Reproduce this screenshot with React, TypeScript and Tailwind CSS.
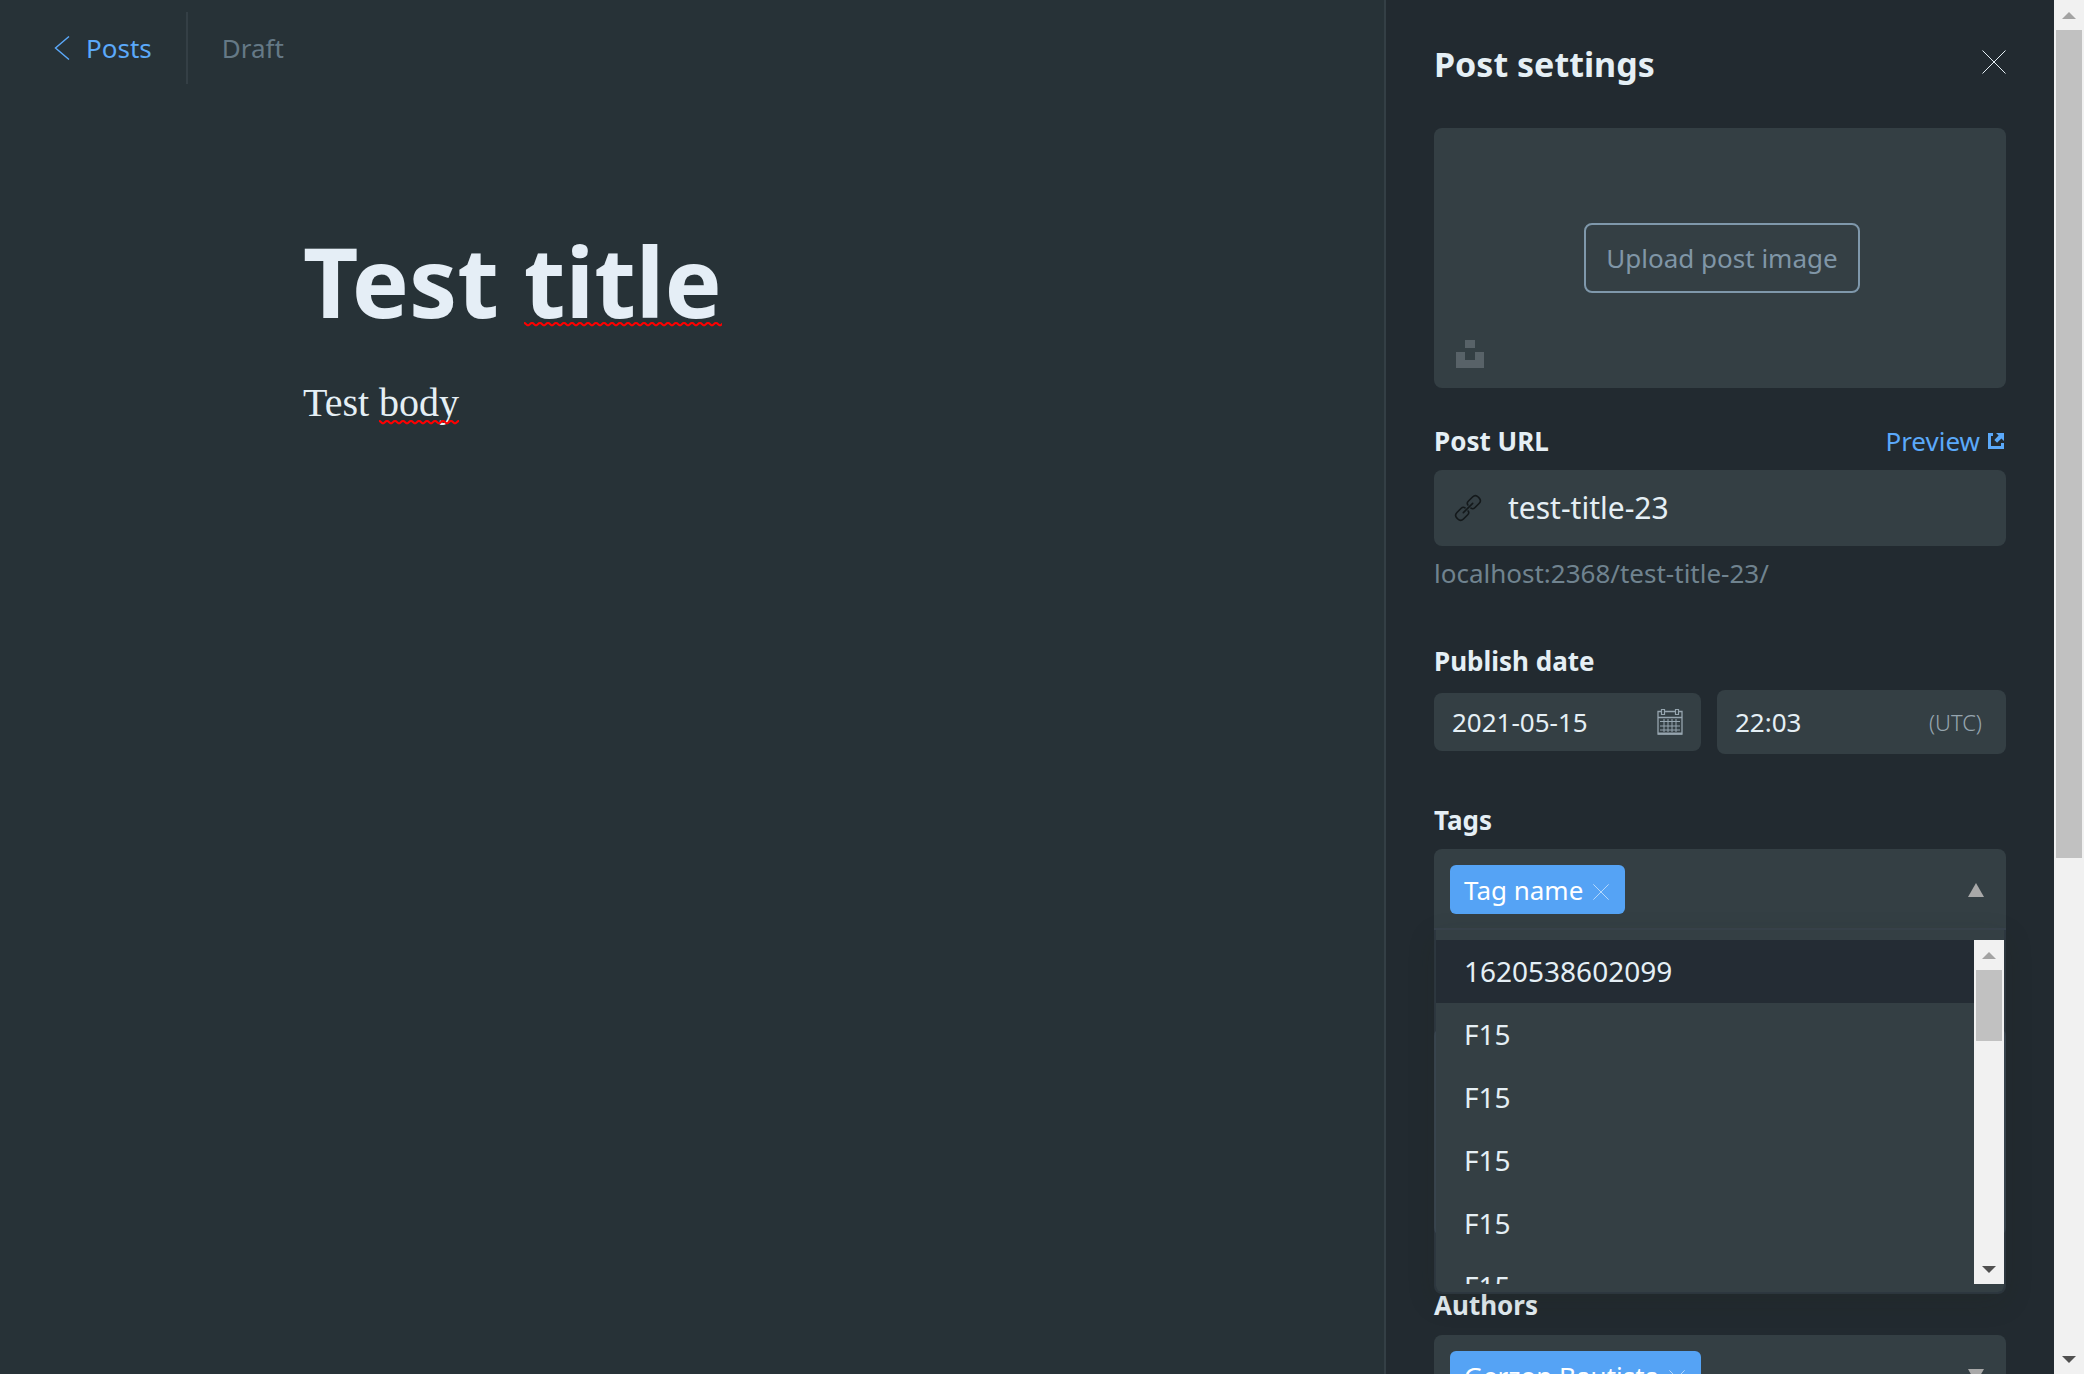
import type { ReactNode } from "react";

const tagOptions = ["1620538602099", "F15", "F15", "F15", "F15", "F15"];

function Cross({ className }: { className: string }) {
  return (
    <svg viewBox="0 0 24 24" fill="none" stroke="currentColor" className={className} aria-hidden="true">
      <path d="M0.5 0.5 23.5 23.5M23.5 0.5 0.5 23.5" vectorEffect="non-scaling-stroke" />
    </svg>
  );
}

function Triangle({ up = false, className }: { up?: boolean; className: string }) {
  return (
    <svg viewBox="0 0 16 14" preserveAspectRatio="none" fill="currentColor" className={className} aria-hidden="true">
      <path d={up ? "M8 0 16 14H0Z" : "M0 0H16L8 14Z"} />
    </svg>
  );
}

function Misspelled({ id, className, children }: { id: string; className: string; children: ReactNode }) {
  return (
    <span className="relative inline-block">
      {children}
      <svg className={"absolute left-0 h-[5px] w-full " + className} aria-hidden="true">
        <defs>
          <pattern id={id} width="8" height="5" patternUnits="userSpaceOnUse">
            <path d="M-1 1.200Q0 .8 1 1.200L3 3Q4 3.700 5 3L7 1.200Q8 .8 9 1.200" stroke="#ff0000" strokeWidth="2" fill="none" />
          </pattern>
        </defs>
        <rect width="100%" height="5" fill={`url(#${id})`} />
      </svg>
    </span>
  );
}

function Token({ children }: { children: string }) {
  return (
    <span className="flex h-[49px] items-center gap-2.5 rounded-md bg-[#55a3f5] pr-4 pl-3.5 text-white">
      {children}
      <button aria-label={"Remove " + children} className="mt-1 text-[#b5d8fb]">
        <Cross className="size-4" />
      </button>
    </span>
  );
}

function Scrollbar({ thumb }: { thumb: string }) {
  return (
    <div className="flex w-[30px] shrink-0 flex-col items-center bg-[#f1f1f1]" aria-hidden="true">
      <div className="flex h-[30px] shrink-0 items-center">
        <Triangle up className="h-[7px] w-3.5 text-[#a3a3a3]" />
      </div>
      <div className="min-h-0 w-full flex-1 px-0.5">
        <div className={"w-full bg-[#c1c1c1] " + thumb} />
      </div>
      <div className="flex h-[30px] shrink-0 items-center">
        <Triangle className="h-[7px] w-3.5 text-[#505050]" />
      </div>
    </div>
  );
}

const label = "block text-[26px] leading-9 font-bold text-[#e5eff5]";

export default function App() {
  return (
    <div className="flex h-screen overflow-hidden bg-[#273237] font-['Noto_Sans',sans-serif] text-[26px] leading-9 text-[#e5eff5]">
      <main className="min-w-0 flex-1">
        <header className="flex items-center py-3">
          <a href="#posts" className="flex h-[72px] items-center gap-4 border-r-2 border-[#343f45] pr-[34px] pl-[54px] text-[#5ba9fa]">
            <svg viewBox="0 0 16 24" fill="none" stroke="currentColor" className="h-6 w-4" aria-hidden="true">
              <path d="M15 0.5 1.5 12 15 23.5" strokeWidth="1.4" />
            </svg>
            Posts
          </a>
          <span className="pl-[34px] text-[#657986]">Draft</span>
        </header>
        <article className="mx-auto w-full max-w-[778px] pt-[135px]">
          <h1 className="text-[96px] leading-[100px] font-bold text-[#e5eef6]">
            Test <Misspelled id="wave-title" className="top-[91px]">title</Misspelled>
          </h1>
          <p className="mt-[42px] font-['Liberation_Serif',serif] text-[40px] leading-[60px]">
            Test <Misspelled id="wave-body" className="top-[47px]">body</Misspelled>
          </p>
        </article>
      </main>

      <aside className="w-[670px] shrink-0 border-l-2 border-[#343f45] bg-[#222a30] px-12 pt-10">
        <div className="flex items-start justify-between">
          <h2 className="text-[34px] leading-[48px] font-bold">Post settings</h2>
          <button aria-label="Close" className="flex h-11 items-center">
            <Cross className="size-6" />
          </button>
        </div>

        <div className="relative mt-10 flex h-[260px] items-center justify-center rounded-lg bg-[#343f44]">
          <button className="ml-1 h-[70px] rounded-lg border-2 border-[#7f98ab] px-5 text-[#8096a7]">Upload post image</button>
          <button aria-label="Choose from Unsplash" className="absolute bottom-5 left-[22px] text-[#586268]">
            <svg viewBox="0 0 28 28" fill="currentColor" className="size-7" aria-hidden="true">
              <path d="M9 0h10v8H9zM0 12h9v8h10v-8h9v16H0z" />
            </svg>
          </button>
        </div>

        <div className="mt-[35px] flex justify-between">
          <label htmlFor="url" className={label}>Post URL</label>
          <a href="#preview" className="mr-0.5 flex items-center gap-2 text-[#5ba9fa]">
            Preview
            <svg viewBox="0 0 16 16" fill="currentColor" className="size-4" aria-hidden="true">
              <path d="M0 0h5v3H3v10h10v-3h3v6H0zM8 0h8v8l-2.600-2.600-4.300 4.300-2.800-2.800L10.600 2.600z" />
            </svg>
          </a>
        </div>
        <div className="mt-[11px] flex h-[76px] items-center gap-[26px] rounded-lg bg-[#343f44] px-5">
          <svg viewBox="-14 -14 28 28" fill="none" stroke="#14191b" strokeWidth="1.6" strokeLinecap="round" className="size-7 shrink-0" aria-hidden="true">
            <g transform="rotate(-45)">
              <path d="M-6.600 0H6.600" />
              <path d="M2 2.200Q2.400 4.600 5 4.600H11Q15 4.600 15 .6V-.6Q15-4.600 11-4.600H5Q2.400-4.600 2-2.200" />
              <path d="M-2 2.200Q-2.400 4.600-5 4.600H-11Q-15 4.600-15 .6V-.6Q-15-4.600-11-4.600H-5Q-2.400-4.600-2-2.200" />
            </g>
          </svg>
          <input id="url" defaultValue="test-title-23" className="min-w-0 flex-1 bg-transparent text-[30px] outline-none" />
        </div>
        <p className="mt-[9px] text-[#70838f]">localhost:2368/test-title-23/</p>

        <label htmlFor="date" className={label + " mt-[52px]"}>Publish date</label>
        <div className="mt-[11px] flex items-center gap-4">
          <div className="flex h-[58px] w-[267px] items-center justify-between rounded-lg bg-[#343f44] pr-[18px] pl-[18px]">
            <input id="date" defaultValue="2021-05-15" className="w-44 min-w-0 bg-transparent outline-none" />
            <svg viewBox="0 0 26 26" fill="none" stroke="#96a5af" className="size-[26px] shrink-0" aria-hidden="true">
              <path d="M4 2.500H1V25H25V2.500H22M8 2.500H18M1 8.500H25" strokeWidth="1.3" />
              <path d="M4.500.5h3v5h-3zM18.500.5h3v5h-3z" strokeWidth="1.2" />
              <path d="M3 12.500H23M3 17H23M3 21H23M7 10V23M11 10V23M15 10V23M19 10V23" />
              <path d="M1 24.500H25" strokeWidth="2" />
            </svg>
          </div>
          <div className="flex h-16 min-w-0 flex-1 items-center rounded-lg bg-[#343f44] pr-6 pl-[18px]">
            <input aria-label="Publish time" defaultValue="22:03" className="min-w-0 flex-1 bg-transparent outline-none" />
            <span className="text-[22px] font-light text-[#96a5af]">(UTC)</span>
          </div>
        </div>

        <p id="tags-label" className={label + " mt-12"}>Tags</p>
        <div className="relative mt-[11px]">
          <div role="combobox" aria-expanded="true" aria-controls="tag-list" aria-labelledby="tags-label" className="flex h-[81px] items-center justify-between rounded-t-lg border-b-2 border-[#39434d] bg-[#343f44] pt-0.5 pr-[22px] pl-4">
            <Token>Tag name</Token>
            <Triangle up className="h-3.5 w-4 text-[#a9a9a9]" />
          </div>
          <div className="absolute inset-x-0 top-full rounded-b-lg border-2 border-t-0 border-[#39454f]/50 bg-[#343f44] bg-clip-padding pt-2.5 pb-2 shadow-[0_8px_28px_rgba(32,38,18,0.16)]">
            <div className="flex h-[344px] overflow-hidden">
              <ul id="tag-list" role="listbox" aria-labelledby="tags-label" className="min-w-0 flex-1 text-[28px]">
                {tagOptions.map((name, i) => (
                  <li key={i} role="option" aria-selected={i === 0} className={"flex h-[63px] items-center pb-0.5 pl-7 " + (i === 0 ? "bg-[#242c34]" : "")}>
                    {name}
                  </li>
                ))}
              </ul>
              <Scrollbar thumb="h-[71px]" />
            </div>
          </div>
        </div>

        <textarea aria-label="Excerpt" className="mt-[98px] block h-[208px] w-full resize-none rounded-lg border-2 border-[#39454f] bg-[#343f44]" />

        <p id="authors-label" className={label + " mt-[51px]"}>Authors</p>
        <div role="combobox" aria-expanded="false" aria-controls="author-list" aria-labelledby="authors-label" className="mt-3 flex h-[81px] items-center justify-between rounded-lg bg-[#343f44] pr-[22px] pl-4">
          <Token>Gerzon Bautista</Token>
          <Triangle className="h-3.5 w-4 text-[#a9a9a9]" />
        </div>
      </aside>
      <Scrollbar thumb="h-[63%]" />
    </div>
  );
}
